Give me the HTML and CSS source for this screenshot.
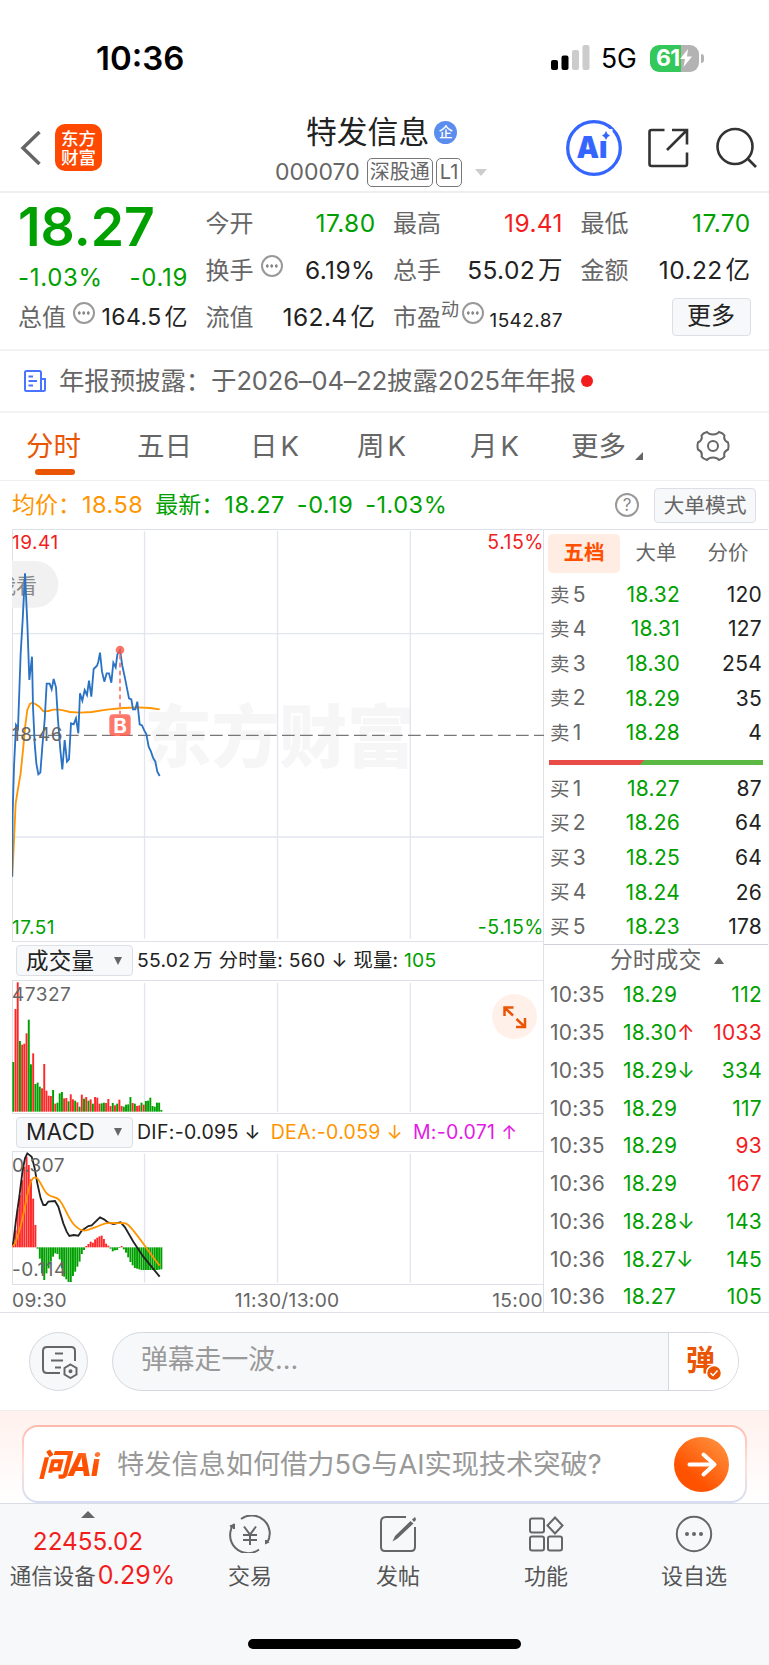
FILE: index.html
```html
<!DOCTYPE html>
<html lang="zh-CN">
  <head>
    <meta charset="utf-8">
    <title>特发信息 000070</title>
    <link rel="stylesheet" href="styles.css">
  </head>
  <body>
    <div class="status">
      <span class="clock">10:36</span>
      <svg class="signal" width="39" height="25" viewBox="0 0 39 25">
        <rect x="0" y="15" width="7" height="10" rx="2"/>
        <rect x="10.5" y="10.5" width="7" height="14.500" rx="2"/>
        <rect class="off" x="21" y="5" width="7" height="20" rx="2"/>
        <rect class="off" x="31.500" y="0" width="7" height="25" rx="2"/>
      </svg>
      <span class="net">5G</span>
      <div class="battery">
        <span>61</span>
        <svg width="12" height="18" viewBox="0 0 12 18"><path d="M8 0 0 10h5L3.500 18 12 7.500H7z" fill="#fff"/></svg>
      </div>
      <i class="nub"></i>
    </div>

    <div class="header">
      <svg class="back" width="22" height="36" viewBox="0 0 22 36"><path d="M19.500 2 3 18l16.500 16"/></svg>
      <div class="logo">东方<br>财富</div>
      <div class="title">
        <div class="name">特发信息<span class="badge">企</span></div>
        <div class="code">000070 <span class="tag">深股通</span><span class="tag">L1</span><i class="caret"></i></div>
      </div>
      <svg class="ai" width="56" height="56" viewBox="0 0 56 56">
        <circle cx="28" cy="28" r="26.300"/>
        <text x="10.500" y="37.500" textLength="31" lengthAdjust="spacingAndGlyphs">Ai</text>
        <path class="dot" d="M32.500 9h14v11.500h-14z"/>
        <path class="star" d="M40 11q1 3.500 4 4.500-3 1-4 4.500-1-3.500-4-4.500 3-1 4-4.500z"/>
      </svg>
      <svg class="share" width="42" height="42" viewBox="0 0 42 42"><path d="M17.500 3H4.500Q2.500 3 2.500 5v32q0 2 2 2h33.500q2 0 2-2V25.500M25 3h15v14.500M40 3 20 23"/></svg>
      <svg class="search" width="42" height="42" viewBox="0 0 42 42"><circle cx="20" cy="19.500" r="17.500"/><path d="m32 31 9 9"/></svg>
    </div>

    <div class="quote">
      <div class="col first">
        <div class="price down">18.27</div>
        <div class="row change down"><span>-1.03%</span><span>-0.19</span></div>
        <div class="row"><label>总值</label><i class="more"></i><b class="mid">164.5<u>亿</u></b></div>
      </div>
      <div class="col">
        <div class="row"><label>今开</label><b class="down">17.80</b></div>
        <div class="row"><label>换手</label><i class="more"></i><b>6.19%</b></div>
        <div class="row"><label>流值</label><b>162.4<u>亿</u></b></div>
      </div>
      <div class="col">
        <div class="row"><label>最高</label><b class="up">19.41</b></div>
        <div class="row"><label>总手</label><b>55.02<u>万</u></b></div>
        <div class="row"><label>市盈</label><sup>动</sup><i class="more"></i><b class="small">1542.87</b></div>
      </div>
      <div class="col">
        <div class="row"><label>最低</label><b class="down">17.70</b></div>
        <div class="row"><label>金额</label><b>10.22<u>亿</u></b></div>
        <div class="row"><span class="button">更多</span></div>
      </div>
    </div>

    <div class="notice">
      <svg width="22" height="22" viewBox="0 0 22 22"><path d="M17 21H2.500Q1 21 1 19.500v-17Q1 1 2.500 1h13Q17 1 17 2.500V21h2.500q1.500 0 1.500-1.500V9h-4M4.500 6.500H9M4.500 11H13M4.500 15.500H9"/></svg>
      <span>年报预披露：于2026–04–22披露2025年年报</span>
      <i></i>
    </div>

    <div class="tabs">
      <span class="active">分时</span>
      <span>五日</span>
      <span>日<u>K</u></span>
      <span>周<u>K</u></span>
      <span>月<u>K</u></span>
      <span class="drop">更多</span>
      <svg width="34" height="32" viewBox="-17 -16 34 32">
        <path d="M-6-14q2 2.500 6 2.500T6-14q4 1 5.500 3.500Q10-6 15-3.500 16 0 15 3.500 10 6 11.500 10.500 10 13 6 14 4 11.500 0 11.500T-6 14q-4-1-5.500-3.500Q-10 6-15 3.500-16 0-15-3.500-10-6-11.500-10.500-10-13-6-14z"/>
        <circle r="5"/>
      </svg>
    </div>

    <div class="info">
      <span class="avg">均价：</span><span class="avg num">18.58</span>
      <span class="down">最新：</span><span class="down num">18.27</span><span class="down num">-0.19</span><span class="down num">-1.03%</span>
      <i class="help">?</i>
      <span class="mode">大单模式</span>
    </div>

    <div class="main">
      <div class="charts">
        <div class="pane trend">
          <svg width="532" height="412" viewBox="36 147 1596 1236">
            <text class="watermark" x="432" y="846">东方财富</text>
            <path class="grid" d="M36 461H1632M36 1071H1632M433.500 154V1376M832.500 154V1376M1231 154V1376"/>
            <path class="pill" d="M36 243h69a70 70 0 0 1 0 140H36z"/>
            <text class="look" x="-15" y="338">我看</text>
            <path class="zero" d="M36 766H1632"/>
            <polyline class="avgline" points="37,1190 42,1080 47,970 55,920 62,880 70,800 76,735 82,690 90,672 97,668 106,672 118,680 130,694 145,693 160,689 175,689 190,691 210,696 240,698 275,696 320,689 370,684 415,682 450,684 479,688"/>
            <polyline class="priceline" points="36,1190 38,1000 42,860 48,735 54,745 62,520 68,420 75,280 82,430 88,600 96,530 99,680 104,790 109,850 115,883 121,878 127,800 134,720 140,611 149,611 155,628 161,597 168,622 174,720 181,810 187,868 194,780 201,845 207,838 213,730 221,733 228,715 235,760 240,640 247,662 254,630 261,645 267,602 274,650 281,567 291,557 295,545 300,518 306,575 313,605 320,580 327,580 334,608 340,548 347,562 352,524 360,510 367,558 374,590 387,655 394,658 399,688 406,688 412,665 419,733 426,736 433,752 439,762 446,800 453,815 459,833 466,845 472,875 479,888"/>
            <path class="drop-line" d="M360 524V702"/>
            <circle class="buy" cx="360" cy="510" r="13"/>
            <rect class="buy" x="328" y="703" width="64" height="65" rx="12"/>
            <text class="buy-b" x="360" y="758">B</text>
            <text class="tick" x="36" y="783">18.46</text>
          </svg>
          <span class="label up">19.41</span>
          <span class="label up right">5.15%</span>
          <span class="label down bottom">17.51</span>
          <span class="label down bottom right">-5.15%</span>
        </div>

        <div class="legend">
          <span class="select">成交量</span>
          <span>55.02<u>万</u></span><span>分时量: 560</span><span class="arrow">↓</span><span>现量: <em class="down">105</em></span>
        </div>
        <div class="pane volume">
          <svg id="volume" width="532" height="133" viewBox="36 118 1596 399">
            <path class="grid" d="M433.500 127V513M832.500 127V513M1231 127V513"/>
          </svg>
          <span class="label">47327</span>
          <svg class="expand" width="45" height="45" viewBox="0 0 45 45"><path d="M12.500 22V13.500H21.500M12.500 13.500l8.500 8M33 24v9H24M33 33l-8.500-8"/></svg>
        </div>

        <div class="legend wide">
          <span class="select">MACD</span>
          <span>DIF:-0.095</span><span class="arrow">↓</span>
          <span class="avg">DEA:-0.059</span><span class="arrow avg">↓</span>
          <span class="m">M:-0.071</span><span class="arrow m">↑</span>
        </div>
        <div class="pane macd">
          <svg width="532" height="133" viewBox="36 633 1596 399">
            <path class="grid" d="M433.500 641V1028M832.500 641V1028M1231 641V1028"/>
            <g id="macd-bars"></g>
            <polyline class="dif" points="39,915 48,840 58,770 68,690 75,655 82,640 95,650 103,680 112,730 122,775 130,795 137,795 145,785 165,783 175,800 190,850 200,875 208,888 221,885 235,887 245,872 265,858 275,856 300,832 312,838 322,846 340,852 362,847 375,862 400,905 430,950 479,1010"/>
            <path class="dea-line" d="M40 918C60 890 72 812 82 765S98 712 106 712C118 712 126 745 140 760S165 767 178 780C198 805 205 840 228 860S262 870 285 862 310 847 340 849 375 843 392 862C425 900 450 942 479 977"/>
          </svg>
          <span class="label">0.307</span>
          <span class="label bottom">-0.114</span>
        </div>
        <div class="axis"><span>09:30</span><span class="noon">11:30/13:00</span><span>15:00</span></div>
      </div>

      <div class="book">
        <div class="book-tabs"><span class="active">五档</span><span>大单</span><span>分价</span></div>
        <div class="level"><label>卖<u>5</u></label><span>18.32</span><b>120</b></div>
        <div class="level"><label>卖<u>4</u></label><span>18.31</span><b>127</b></div>
        <div class="level"><label>卖<u>3</u></label><span>18.30</span><b>254</b></div>
        <div class="level"><label>卖<u>2</u></label><span>18.29</span><b>35</b></div>
        <div class="level"><label>卖<u>1</u></label><span>18.28</span><b>4</b></div>
        <div class="ratio"></div>
        <div class="level"><label>买<u>1</u></label><span>18.27</span><b>87</b></div>
        <div class="level"><label>买<u>2</u></label><span>18.26</span><b>64</b></div>
        <div class="level"><label>买<u>3</u></label><span>18.25</span><b>64</b></div>
        <div class="level"><label>买<u>4</u></label><span>18.24</span><b>26</b></div>
        <div class="level"><label>买<u>5</u></label><span>18.23</span><b>178</b></div>
        <div class="deals-title">分时成交<i></i></div>
        <div class="deal"><label>10:35</label><span>18.29</span><b class="down">112</b></div>
        <div class="deal"><label>10:35</label><span>18.30<em class="up">↑</em></span><b class="up">1033</b></div>
        <div class="deal"><label>10:35</label><span>18.29<em>↓</em></span><b class="down">334</b></div>
        <div class="deal"><label>10:35</label><span>18.29</span><b class="down">117</b></div>
        <div class="deal"><label>10:35</label><span>18.29</span><b class="up">93</b></div>
        <div class="deal"><label>10:36</label><span>18.29</span><b class="up">167</b></div>
        <div class="deal"><label>10:36</label><span>18.28<em>↓</em></span><b class="down">143</b></div>
        <div class="deal"><label>10:36</label><span>18.27<em>↓</em></span><b class="down">145</b></div>
        <div class="deal"><label>10:36</label><span>18.27</span><b class="down">105</b></div>
      </div>
    </div>

    <div class="danmu">
      <div class="round">
        <svg width="38" height="34" viewBox="0 0 38 34"><path d="M19 28H6q-4 0-4-4V6q0-4 4-4h24q4 0 4 4v10M14 8.500h8M10 15.500h12M14 22.500h6"/><path d="m29.500 19.500 6 3.500v6.500l-6 3.500-6-3.500V23z"/><circle cx="29.500" cy="26.300" r="1"/></svg>
      </div>
      <div class="input">
        <span class="placeholder">弹幕走一波...</span>
        <div class="send">弹<svg width="16" height="16" viewBox="0 0 16 16"><circle cx="8" cy="8" r="7.500"/><path d="m4.500 8 2.500 2.500 4.500-5"/></svg></div>
      </div>
    </div>

    <div class="ask">
      <div class="ask-box">
        <span class="ask-logo">问Ai</span>
        <span class="ask-text">特发信息如何借力5G与AI实现技术突破?</span>
        <svg width="55" height="55" viewBox="0 0 55 55">
          <defs><linearGradient id="go" x1="0.300" y1="0.700" x2="0.900" y2="0"><stop offset="0" stop-color="#ff5200"/><stop offset="1" stop-color="#ff9440"/></linearGradient></defs>
          <circle cx="27.500" cy="27.500" r="27.500" fill="url(#go)"/>
          <path d="M15.500 27.500H40M29.500 17.500l11 10-11 10"/>
        </svg>
      </div>
    </div>

    <div class="nav">
      <div class="item index">
        <i></i>
        <span class="points">22455.02</span>
        <span class="sector">通信设备<b>0.29%</b></span>
      </div>
      <div class="item">
        <svg width="44" height="38" viewBox="0 0 44 38"><path d="M13 4A18 18 0 0 1 39 28M41 26.500l-3 1.500 0-3M31 34.500A18 18 0 0 1 6 9M2 11.500l4-1.500v4M16 11.500l6 8 6-8M15 20h14M15 25h14M22 19.500V30"/></svg>
        <span>交易</span>
      </div>
      <div class="item">
        <svg width="38" height="38" viewBox="0 0 38 38"><path d="M27 2H7Q2 2 2 7v25q0 4 4 4h26q4 0 4-4V12"/><path class="fill" d="m31.500 6 3 2.500-16 15-5 3 2.500-5.500zM33 4.500 36 2q1.500 2 .5 3.500l-1.500 1.500z"/></svg>
        <span>发帖</span>
      </div>
      <div class="item">
        <svg width="36" height="36" viewBox="0 0 36 36"><rect x="2" y="2.500" width="14" height="14" rx="2"/><rect x="2" y="20.500" width="14" height="14" rx="2"/><rect x="20" y="20.500" width="14" height="14" rx="2"/><path d="m27 1.500 7.500 8-7.500 8-7.500-8z"/></svg>
        <span>功能</span>
      </div>
      <div class="item">
        <svg width="38" height="38" viewBox="0 0 38 38"><circle cx="19" cy="19" r="17.200"/><g class="fill"><circle cx="12" cy="19" r="2"/><circle cx="19" cy="19" r="2"/><circle cx="26" cy="19" r="2"/></g></svg>
        <span>设自选</span>
      </div>
      <div class="home"></div>
    </div>
    <script src="charts.js"></script>
  </body>
</html>
```
FILE: styles.css
```css
* {
  box-sizing: border-box;
}
body {
  margin: 0;
  width: 769px;
  background: #fff;
  color: #222;
  font-family: Inter, "Noto Sans CJK SC", sans-serif;
  font-size: 24px;
  line-height: 1;
  white-space: nowrap;
}
b, em, i {
  font-weight: normal;
  font-style: normal;
}
/* unit or digit set slightly apart from its neighbour */
u {
  margin-left: 3px;
  text-decoration: none;
}
svg {
  display: block;
  flex: none;
  fill: none;
}
.up {
  color: #f21d1d;
}
.down {
  color: #00a000;
}
.avg {
  color: #ff9500;
}
.m {
  color: #e31be3;
}

/* status bar */
.status {
  display: flex;
  align-items: center;
  height: 116px;
  padding-left: 96px;
  color: #000;
}
.clock {
  width: 455px;
  font-size: 33px;
  font-weight: 600;
}
.signal {
  margin-bottom: 1px;
  fill: #000;
}
.signal .off {
  fill: #ccc;
}
.net {
  width: 49px;
  margin-left: 11px;
  padding-top: 1px;
  font-size: 26.500px;
}
.battery {
  display: flex;
  align-items: center;
  width: 49px;
  height: 27px;
  padding-left: 6px;
  border-radius: 9px;
  background: linear-gradient(90deg, #34c759 63%, #b3b3b3 63%);
  color: #fff;
  font-size: 23px;
  font-weight: 700;
  letter-spacing: -.8px;
}
.battery svg {
  margin-left: 1px;
}
.nub {
  width: 3px;
  height: 9px;
  margin-left: 2px;
  border-radius: 0 3px 3px 0;
  background: #b3b3b3;
}

/* title bar */
.header {
  display: flex;
  align-items: center;
  height: 77px;
  padding: 0 0 12px 20px;
  border-bottom: 2px solid #eee;
}
.back {
  stroke: #666;
  stroke-width: 3.5;
}
.logo {
  width: 47px;
  height: 47px;
  margin-left: 13px;
  padding-top: 5px;
  border-radius: 10px;
  background: #ff4800;
  color: #fff;
  font-size: 17.5px;
  font-weight: 500;
  line-height: 19px;
  text-align: center;
}
.title {
  width: 464px;
  padding: 7px 0 0 173px;
}
.name {
  display: flex;
  align-items: center;
  height: 34px;
  padding-left: 31px;
  font-size: 30.800px;
}
.badge {
  width: 23px;
  height: 23px;
  margin-left: 5px;
  border-radius: 50%;
  background: #5b8def;
  color: #fff;
  font-size: 14px;
  font-weight: 500;
  line-height: 22px;
  text-align: center;
}
.code {
  display: flex;
  align-items: center;
  height: 30px;
  margin-top: 8px;
  color: #666;
  font-size: 23px;
}
.tag {
  height: 29px;
  margin-right: 4px;
  padding: 0 2px;
  border: 1.500px solid #777;
  border-radius: 5px;
  font-size: 20px;
  line-height: 26px;
}
.tag:first-of-type {
  margin-left: 7px;
}
.tag + .tag {
  padding: 0 3px;
  margin-left: -1px;
}
.caret {
  margin-left: 9px;
  border: 6.500px solid transparent;
  border-top: 7px solid #ccc;
  border-bottom: 0;
}
.ai circle {
  stroke: #3565ff;
  stroke-width: 3.3;
}
.ai text {
  fill: #3565ff;
  font-size: 30px;
  font-weight: 900;
}
.ai .dot {
  fill: #fff;
}
.ai .star {
  fill: #3565ff;
}
.share {
  margin-left: 25px;
}
.search {
  margin-left: 26px;
}
.share,
.search {
  stroke: #333;
  stroke-width: 2.6;
}

/* quote summary */
.quote {
  display: flex;
  gap: 19.500px;
  height: 158px;
  padding: 7px 0 0 18px;
  border-bottom: 2px solid #f2f2f4;
}
.col {
  width: 168px;
}
.row {
  display: flex;
  align-items: center;
  height: 47px;
}
.row label {
  color: #666;
  font-size: 24px;
}
.row b {
  margin: 0 -2px 0 auto;
  font-size: 24.500px;
  letter-spacing: .4px;
}
.row .mid {
  font-size: 23px;
}
.row .small {
  padding-top: 6px;
  font-size: 19px;
}
.row sup {
  margin-bottom: 16px;
  color: #666;
  font-size: 18px;
}
.price {
  height: 58px;
  margin-top: -2px;
  font-size: 53.500px;
  font-weight: 600;
  line-height: 58px;
}
.change {
  justify-content: space-between;
  height: 38px;
  margin-right: -2px;
  padding-top: 5px;
  letter-spacing: .7px;
}
.more {
  width: 22px;
  height: 22px;
  margin: 0 0 10px 7px;
  border: 2px solid #999;
  border-radius: 50%;
  background: radial-gradient(circle, #888 1.500px, transparent 1.800px) 0 0 / 4.500px 18px repeat-x content-box;
  padding: 0 2px;
}
sup + .more {
  margin-left: 3px;
}
.button {
  width: 79px;
  height: 38px;
  margin: 0 -2px 2px auto;
  border: 1.500px solid #dddfe6;
  border-radius: 4px;
  background: #f7f8fa;
  font-size: 24px;
  line-height: 34px;
  text-align: center;
}

.notice {
  display: flex;
  align-items: center;
  height: 62px;
  padding-left: 24px;
  border-bottom: 2px solid #f4f4f4;
  color: #666;
  font-size: 25.500px;
}
.notice svg {
  margin-right: 13px;
  stroke: #4a74ff;
  stroke-width: 2;
}
.notice span {
  letter-spacing: -.15px;
}
.notice i {
  width: 12px;
  height: 12px;
  margin-left: 5px;
  border-radius: 50%;
  background: #f21d1d;
}

/* period tabs */
.tabs {
  display: grid;
  grid-template-columns: 111px 113px 107px 113px 101px 125px 40px;
  align-items: center;
  height: 68px;
  padding-left: 26px;
  border-bottom: 1px solid #eee;
  color: #666;
  font-size: 27.500px;
}
.tabs .active {
  position: relative;
  color: #ea5504;
}
.tabs .active::after {
  content: '';
  position: absolute;
  left: 9px;
  top: 36px;
  width: 40px;
  height: 6px;
  border-radius: 3px;
  background: #ea5504;
}
.tabs .drop::after {
  content: '';
  display: inline-block;
  margin: 0 0 -4px 9px;
  border-left: 8px solid transparent;
  border-bottom: 8px solid #666;
}
.tabs svg {
  margin-bottom: 2px;
  stroke: #666;
  stroke-width: 2;
}

.info {
  display: flex;
  align-items: center;
  height: 48px;
  padding-left: 12px;
  font-size: 23px;
}
.info .num {
  margin-right: 12px;
  font-size: 23.500px;
  letter-spacing: .5px;
}
.info .avg.num {
  margin-left: 1px;
}
.help {
  width: 24px;
  height: 24px;
  margin-left: auto;
  border: 2px solid #999;
  border-radius: 50%;
  color: #888;
  font-size: 17px;
  line-height: 20px;
  text-align: center;
}
.mode {
  width: 102px;
  height: 35px;
  margin: 0 13px 0 15px;
  border: 1.500px solid #dddfe6;
  border-radius: 4px;
  background: #f7f8fa;
  color: #666;
  font-size: 20.800px;
  line-height: 33px;
  text-align: center;
}

/* charts */
.main {
  display: flex;
  height: 784px;
  padding-left: 12px;
  border-bottom: 1px solid #dfe1e8;
}
.charts {
  width: 532px;
}
.pane {
  position: relative;
  border: 1px solid #dfe1e8;
  border-width: 1px 0 1px 1px;
}
.pane > svg:first-child {
  margin: -1px 0 0 -1px;
}
.trend {
  height: 413px;
}
.volume,
.macd {
  height: 134px;
}
.label {
  position: absolute;
  left: -1px;
  top: 3px;
  font-size: 19px;
  letter-spacing: .5px;
}
.label.right {
  left: auto;
  right: 0;
  font-size: 19.500px;
}
.label.bottom {
  top: auto;
  bottom: 4px;
}
.volume .label,
.macd .label {
  top: 4px;
  color: #666;
}
.macd .label.bottom {
  top: auto;
  bottom: 5px;
}
.grid {
  stroke: #e2e5ee;
  stroke-width: 4;
}
.watermark {
  fill: #f6f6f7;
  font-size: 203px;
  font-weight: 900;
}
.pill {
  fill: #f1f1f1;
}
.look {
  fill: #888;
  font-size: 63px;
}
.zero {
  stroke: #777;
  stroke-width: 4;
  stroke-dasharray: 38 16;
}
.avgline,
.dea-line {
  stroke: #ff9500;
  stroke-width: 5.500;
}
.priceline {
  stroke: #2a72c4;
  stroke-width: 5.500;
}
.drop-line {
  stroke: #ff7060;
  stroke-width: 5;
  stroke-dasharray: 14 10;
}
.buy {
  fill: #ff5545;
  opacity: .8;
}
.buy-b {
  fill: #fff;
  font-size: 62px;
  font-weight: 700;
  text-anchor: middle;
}
.tick {
  fill: #666;
  font-size: 57px;
  letter-spacing: 1.5px;
}
.dif {
  stroke: #222;
  stroke-width: 5.500;
}
.bar-up {
  fill: #ff2828;
}
.bar-down {
  fill: #00a000;
}
.legend {
  display: flex;
  align-items: center;
  height: 37.500px;
  padding-left: 4px;
  font-size: 19.300px;
  letter-spacing: .25px;
}
.legend span {
  margin-right: 6px;
}
.legend.wide {
  font-size: 19.500px;
  letter-spacing: .3px;
}
.legend .arrow {
  font-size: 19px;
}
.wide .arrow {
  margin-right: 10px;
}
.legend .select {
  display: flex;
  align-items: center;
  justify-content: space-between;
  width: 117px;
  height: 31px;
  margin-right: 4px;
  padding: 0 10px 0 9px;
  border: 1.500px solid #dddfe6;
  border-radius: 4px;
  background: #f7f8fa;
  font-size: 22.500px;
}
.select::after {
  content: '';
  border: 4.500px solid transparent;
  border-top: 8px solid #666;
  border-bottom: 0;
}
.expand {
  position: absolute;
  right: 7px;
  top: 13px;
  border-radius: 50%;
  background: #fff0ea;
  stroke: #ea5504;
  stroke-width: 2.5;
}
.axis {
  display: flex;
  justify-content: space-between;
  padding: 6px 1px 0 0;
  color: #666;
  font-size: 19.200px;
  letter-spacing: .3px;
}
.noon {
  padding-left: 20px;
}
.axis span:last-child {
  margin-left: 5px;
}

/* order book and deals */
.book {
  width: 225px;
  margin-left: -1px;
  border: 1px solid #dfe1e8;
  border-width: 1px 0 0 1px;
}
.book-tabs {
  display: flex;
  height: 47px;
  padding: 4px 0 0 4px;
  color: #666;
  font-size: 20.500px;
  line-height: 38px;
  text-align: center;
}
.book-tabs span {
  width: 72px;
  height: 39px;
}
.book-tabs .active {
  border-radius: 5px;
  background: #ffece2;
  color: #ff5000;
  font-weight: 700;
}
.level,
.deal {
  display: flex;
  align-items: center;
  height: 34.600px;
  padding: 0 6px 0 6px;
  font-size: 21px;
  letter-spacing: .25px;
}
.level label {
  width: 50px;
  color: #666;
  font-size: 19.500px;
}
.level u {
  font-size: 21px;
}
.level span {
  width: 80px;
  color: #00a000;
  text-align: right;
}
.level b,
.deal b {
  margin-left: auto;
}
.ratio {
  height: 5px;
  margin: 10px 5px 6px 5px;
  background: linear-gradient(135deg, #e94b46 43.500%, #5ab843 43.500%);
}
.deals-title {
  display: flex;
  align-items: center;
  height: 32px;
  padding-left: 66px;
  border-top: 1px solid #cfd2da;
  color: #666;
  font-size: 22.800px;
}
.deals-title i {
  margin-left: 13px;
  border: 5px solid transparent;
  border-bottom: 7px solid #666;
  border-top: 0;
}
.deal {
  height: 37.750px;
}
.deal label {
  width: 73px;
  color: #666;
}
.deal span {
  color: #00a000;
}

/* comments */
.danmu {
  display: flex;
  align-items: center;
  gap: 24px;
  height: 97px;
  padding-left: 29px;
}
.round {
  display: flex;
  align-items: center;
  justify-content: center;
  width: 59px;
  height: 59px;
  border: 1px solid #d5d7de;
  border-radius: 50%;
  background: #f7f8fa;
}
.round svg {
  margin-left: 2px;
  stroke: #666;
  stroke-width: 2;
}
.input {
  display: flex;
  width: 627px;
  height: 59px;
  border: 1px solid #d5d7de;
  border-radius: 30px;
  background: #f7f8fa;
  overflow: hidden;
}
.placeholder {
  flex: 1;
  padding-left: 28px;
  color: #999;
  font-size: 26.800px;
  line-height: 53px;
}
.send {
  position: relative;
  width: 70px;
  padding-left: 17px;
  border-left: 1px solid #d5d7de;
  background: #fff;
  color: #ea5504;
  font-size: 29px;
  font-weight: 700;
  line-height: 56px;
}
.send svg {
  position: absolute;
  left: 37px;
  top: 32px;
  fill: #ea5504;
  stroke: #fff;
  stroke-width: 1.5;
}

.ask {
  height: 93px;
  padding: 14px 22px 0;
  border-top: 1px solid #eee;
  background: linear-gradient(#fff1ed, #fff);
}
.ask-box {
  display: flex;
  align-items: center;
  height: 78px;
  padding: 0 16px 0 14px;
  border: 2px solid transparent;
  border-radius: 16px;
  background: linear-gradient(#fff, #fff) padding-box, linear-gradient(#ffb8ac, #ffe0da 50%, #d6ddf3) border-box;
}
.ask-logo {
  width: 79px;
  background: linear-gradient(20deg, #ff5000 60%, #ff9a70) text;
  color: transparent;
  font-size: 31px;
  font-weight: 800;
  letter-spacing: -1px;
  font-style: italic;
}
.ask-text {
  flex: 1;
  padding-top: 1px;
  color: #999;
  font-size: 27.200px;
}
.ask-box path {
  stroke: #fff;
  stroke-width: 4;
  stroke-linecap: round;
  stroke-linejoin: round;
}

/* bottom nav */
.nav {
  position: relative;
  display: flex;
  height: 162px;
  border-top: 1px solid #d9dce3;
  background: #f7f8fa;
  color: #555;
}
.item {
  display: flex;
  flex-direction: column;
  align-items: center;
  width: 148px;
  padding-top: 11px;
  font-size: 22px;
}
.item svg {
  height: 38px;
  margin-bottom: 12px;
  stroke: #666;
  stroke-width: 2;
}
.item .fill {
  fill: #666;
  stroke: none;
}
.index {
  width: 176px;
  padding-top: 7px;
}
.index i {
  border: 7px solid transparent;
  border-bottom: 7px solid #666;
  border-top: 0;
}
.points {
  margin-top: 11px;
  color: #f21d1d;
  font-size: 24.300px;
}
.sector {
  margin: 10px 0 0 9px;
  font-size: 21.500px;
}
.sector b {
  margin-left: 2px;
  color: #f21d1d;
  font-size: 25px;
}
.home {
  position: absolute;
  left: 248px;
  bottom: 16px;
  width: 273px;
  height: 10px;
  border-radius: 5px;
  background: #000;
}
```
FILE: charts.js
```js
// one entry per minute: direction + bar height
var volume = 'g149 r308 r388 g212 r201 r204 r235 g276 g142 r175 g83 g87 g75 r70 r143 r63 r48 r47 g65 r24 g27 g55 g59 r40 r41 g31 r52 r37 g33 r28 g15 r51 g39 r44 g33 r37 g24 r44 r42 r24 g25 g27 r26 r38 r17 g26 r19 g24 r36 r17 g15 g21 g22 g44 r26 g24 r17 r19 g27 r21 g32 g33 g42 g17 g15 g27 g27 g5';
var macd = [17, 52, 114, 157, 202, 242, 272, 247, 204, 146, 67, -4, -34, -78, -98, -78, -63, -43, -28, -18, -20, -36, -63, -88, -96, -104, -104, -86, -73, -58, -43, -20, -8, 4, 10, 17, 14, 24, 29, 33, 35, 25, 11, 5, -4, -12, -9, -8, -2, 4, -6, -16, -30, -44, -54, -62, -64, -66, -68, -68, -68, -68, -68, -68, -68, -68, -67, -66];
var step = 6.63;

function bar(parent, i, base, h, cls) {
  var r = document.createElementNS('http://www.w3.org/2000/svg', 'rect');
  r.setAttribute('x', 37 + i * step);
  r.setAttribute('y', h > 0 ? base - h : base);
  r.setAttribute('width', 5.8);
  r.setAttribute('height', Math.abs(h));
  r.setAttribute('class', cls);
  parent.appendChild(r);
}

volume.split(' ').forEach(function (v, i) {
  bar(document.getElementById('volume'), i, 513, +v.slice(1), v[0] == 'r' ? 'bar-up' : 'bar-down');
});
macd.forEach(function (h, i) {
  bar(document.getElementById('macd-bars'), i, 922, h, h > 0 ? 'bar-up' : 'bar-down');
});
```
